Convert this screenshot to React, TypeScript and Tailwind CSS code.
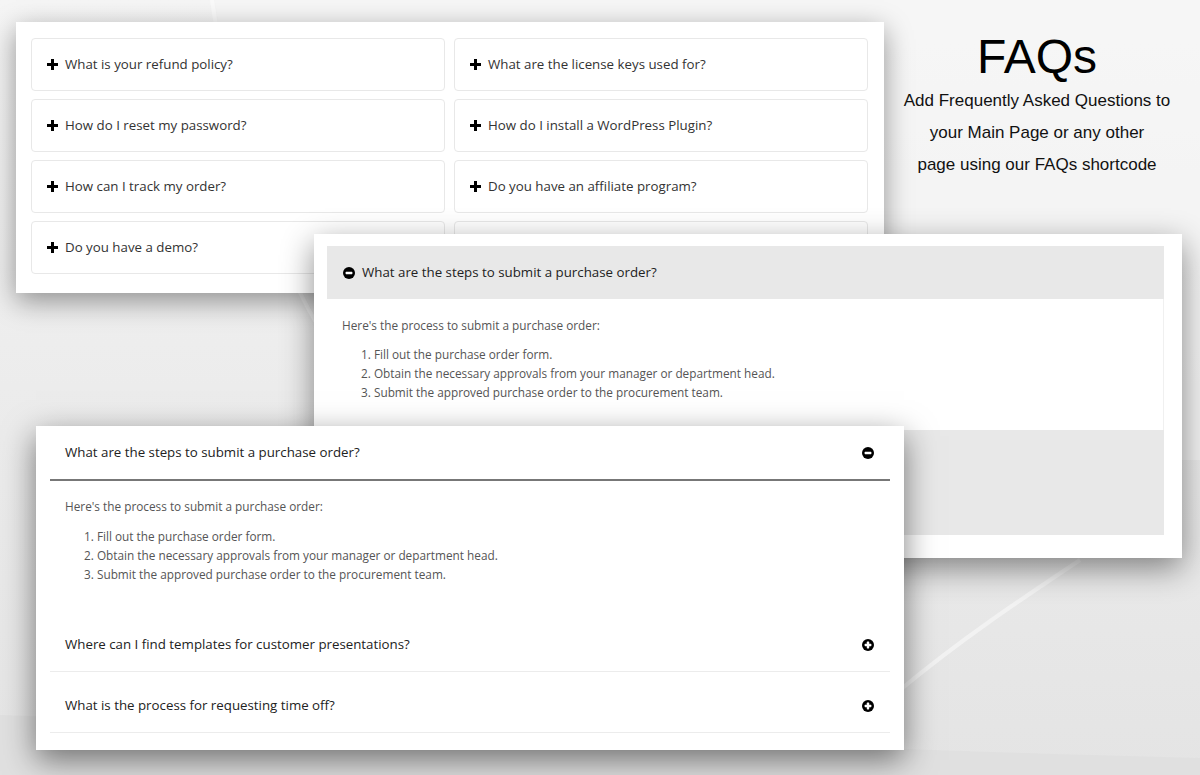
import React from "react";

const ui = { fontFamily: '"Open Sans", "Noto Sans", sans-serif' };
const arial = { fontFamily: '"Liberation Sans", Arial, sans-serif' };

const leftQs = [
  "What is your refund policy?",
  "How do I reset my password?",
  "How can I track my order?",
  "Do you have a demo?",
];
const rightQs = [
  "What are the license keys used for?",
  "How do I install a WordPress Plugin?",
  "Do you have an affiliate program?",
  "",
];

const steps = [
  "Fill out the purchase order form.",
  "Obtain the necessary approvals from your manager or department head.",
  "Submit the approved purchase order to the procurement team.",
];

function Plus() {
  return (
    <svg width="11" height="11" viewBox="0 0 11 11" className="shrink-0">
      <path d="M4 0h3v4h4v3H7v4H4V7H0V4h4z" fill="#000" />
    </svg>
  );
}

function CircleIcon({ plus }: { plus?: boolean }) {
  return (
    <svg width="12" height="12" viewBox="0 0 12 12" className="shrink-0">
      <circle cx="6" cy="6" r="6" fill="#000" />
      <rect x="2.6" y="4.8" width="6.8" height="2.4" rx="0.6" fill="#fff" />
      {plus && <rect x="4.8" y="2.6" width="2.4" height="6.8" rx="0.6" fill="#fff" />}
    </svg>
  );
}

function Background() {
  return (
    <svg className="absolute inset-0" width="1200" height="775" viewBox="0 0 1200 775">
      <defs>
        <linearGradient id="bg" x1="0" y1="0" x2="0" y2="1">
          <stop offset="0" stopColor="#f5f5f5" />
          <stop offset="0.5" stopColor="#ececec" />
          <stop offset="1" stopColor="#e4e4e4" />
        </linearGradient>
      </defs>
      <rect width="1200" height="775" fill="url(#bg)" />
      <path d="M215 0 C 240 180, 300 330, 420 460 L 1200 460 L 1200 0 Z" fill="#f6f6f6" opacity="0.6" />
      <path d="M212 0 C 238 180, 298 332, 418 462" stroke="#fafafa" strokeWidth="4" fill="none" />
      <path d="M900 690 C 960 640, 1020 600, 1080 560" stroke="#f2f2f2" strokeWidth="4" fill="none" />
      <path d="M0 715 C 300 725, 800 748, 1200 758 L 1200 775 L 0 775 Z" fill="#e0e0e0" />
    </svg>
  );
}

export default function App() {
  return (
    <div className="relative w-[1200px] h-[775px] overflow-hidden bg-[#ececec]">
      <Background />

      {/* grid of closed questions */}
      <div
        className="absolute left-[16px] top-[22px] w-[868px] bg-white pl-[15px] pr-[16px] pt-[16px] pb-[19px] shadow-[0_8px_26px_rgba(0,0,0,0.4)]"
        style={ui}
      >
        <div className="grid grid-cols-2 gap-x-[9px] gap-y-[8px]">
          {leftQs.map((q, i) => (
            <React.Fragment key={i}>
              <div className="h-[53px] border border-[#e8e8e8] rounded-[4px] flex items-center pl-[15px] gap-[7px] text-[13.3px] text-[#333]">
                <Plus />
                <span>{q}</span>
              </div>
              <div className="h-[53px] border border-[#e8e8e8] rounded-[4px] flex items-center pl-[15px] gap-[7px] text-[13.3px] text-[#333]">
                {rightQs[i] && <Plus />}
                <span>{rightQs[i]}</span>
              </div>
            </React.Fragment>
          ))}
        </div>
      </div>

      {/* FAQs title */}
      <div className="absolute left-[884px] top-[33px] w-[306px] text-center text-black" style={arial}>
        <div className="text-[48px] leading-[48px]">FAQs</div>
        <div className="mt-[4px] text-[17px] leading-[32px] text-[#111]">
          Add Frequently Asked Questions to
          <br />
          your Main Page or any other
          <br />
          page using our FAQs shortcode
        </div>
      </div>

      {/* toggle style */}
      <div
        className="absolute left-[314px] top-[234px] w-[868px] h-[324px] bg-white pl-[13px] pr-[18px] pt-[12px] shadow-[0_10px_30px_rgba(0,0,0,0.45)]"
        style={ui}
      >
        <div className="h-[53px] bg-[#e8e8e8] flex items-center pl-[16px] gap-[7px] text-[13.3px] text-[#222]">
          <CircleIcon />
          <span>What are the steps to submit a purchase order?</span>
        </div>
        <div className="h-[131px] border-r border-[#f0f0f0] pl-[15px] pt-[17px] text-[11.8px] leading-[19px] text-[#555]">
          <p>Here's the process to submit a purchase order:</p>
          <ol className="mt-[10px] pl-[19px]">
            {steps.map((s, i) => (
              <li key={i}>
                {i + 1}. {s}
              </li>
            ))}
          </ol>
        </div>
        <div className="h-[105px] bg-[#e8e8e8]" />
      </div>

      {/* accordion style */}
      <div
        className="absolute left-[36px] top-[426px] w-[868px] h-[324px] bg-white px-[14px] shadow-[0_10px_30px_rgba(0,0,0,0.5)]"
        style={ui}
      >
        <div className="h-[55px] border-b-2 border-[#777] flex items-center justify-between pl-[15px] pr-[16px] text-[13.3px] text-[#222]">
          <span>What are the steps to submit a purchase order?</span>
          <CircleIcon />
        </div>
        <div className="pl-[15px] pt-[16px] pb-[27px] text-[11.8px] leading-[19px] text-[#555]">
          <p>Here's the process to submit a purchase order:</p>
          <ol className="mt-[11px] pl-[19px]">
            {steps.map((s, i) => (
              <li key={i}>
                {i + 1}. {s}
              </li>
            ))}
          </ol>
        </div>
        {["Where can I find templates for customer presentations?", "What is the process for requesting time off?"].map((q) => (
          <div
            key={q}
            className="mt-[8px] h-[53px] border-b border-[#ececec] flex items-center justify-between pl-[15px] pr-[16px] text-[13.3px] text-[#222]"
          >
            <span>{q}</span>
            <CircleIcon plus />
          </div>
        ))}
      </div>
    </div>
  );
}
